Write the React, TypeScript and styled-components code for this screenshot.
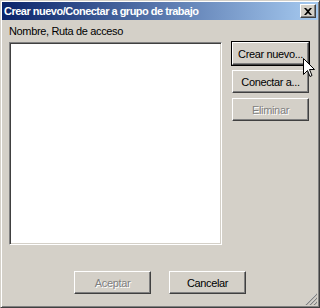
import React from 'react';
import styled, { createGlobalStyle, css } from 'styled-components';

const GlobalStyle = createGlobalStyle`
  html, body {
    margin: 0;
    padding: 0;
    background: #d4d0c8;
  }
  * {
    box-sizing: border-box;
  }
`;

const Window = styled.div`
  position: relative;
  width: 320px;
  height: 308px;
  background: #d4d0c8;
  border: 1px solid;
  border-color: #d4d0c8 #404040 #404040 #d4d0c8;
  box-shadow: inset 1px 1px #ffffff, inset -1px -1px #808080;
  padding: 1px;
  display: flex;
  flex-direction: column;
  font-family: 'Liberation Sans', Arial, sans-serif;
  font-size: 11px;
  letter-spacing: -0.35px;
  color: #000;
  white-space: nowrap;
`;

const TitleBar = styled.div`
  height: 18px;
  display: flex;
  align-items: center;
  justify-content: space-between;
  padding: 0 2px 0 2px;
  background: linear-gradient(to right, #0a246a, #a6caf0);
`;

const Title = styled.span`
  color: #fff;
  font-weight: bold;
  font-size: 11px;
  letter-spacing: -0.5px;
`;

const CloseButton = styled.div`
  width: 16px;
  height: 14px;
  background: #d4d0c8;
  border: 1px solid;
  border-color: #ffffff #404040 #404040 #ffffff;
  box-shadow: inset -1px -1px #808080;
  display: flex;
  align-items: center;
  justify-content: center;
`;

const Main = styled.div`
  display: flex;
  padding: 0 0 0 7px;
  gap: 10px;
`;

const LeftColumn = styled.div`
  display: flex;
  flex-direction: column;
`;

const Label = styled.div`
  margin-top: 5px;
  height: 13px;
  line-height: 13px;
  margin-bottom: 4px;
`;

const ListBox = styled.div`
  width: 213px;
  height: 203px;
  background: #fff;
  border: 1px solid;
  border-color: #808080 #ffffff #ffffff #808080;
  box-shadow: inset 1px 1px #404040, inset -1px -1px #d4d0c8;
`;

const ButtonColumn = styled.div`
  display: flex;
  flex-direction: column;
  gap: 5px;
  padding-top: 22px;
`;

const Button = styled.div<{ $default?: boolean; $disabled?: boolean }>`
  width: 77px;
  height: 23px;
  display: flex;
  align-items: center;
  justify-content: center;
  background: #d4d0c8;
  border: 1px solid;
  border-color: #ffffff #404040 #404040 #ffffff;
  box-shadow: inset -1px -1px #808080;
  ${({ $default }) =>
    $default &&
    css`
      box-shadow: 0 0 0 1px #000, inset -1px -1px #808080;
    `}
  ${({ $disabled }) =>
    $disabled &&
    css`
      color: #808080;
      text-shadow: 1px 1px #ffffff;
    `}
`;

const Footer = styled.div`
  display: flex;
  justify-content: center;
  gap: 18px;
  padding-top: 26px;
`;

const Grip = styled.svg`
  position: absolute;
  right: 2px;
  bottom: 2px;
`;

const Cursor = styled.svg`
  position: absolute;
  left: 302px;
  top: 57px;
`;

export default function App() {
  return (
    <>
      <GlobalStyle />
      <Window>
        <TitleBar>
          <Title>Crear nuevo/Conectar a grupo de trabajo</Title>
          <CloseButton>
            <svg width="8" height="7" viewBox="0 0 8 7">
              <path d="M0 0h2l2 2 2-2h2L5 3.5 8 7H6L4 5 2 7H0l3-3.5z" fill="#000" />
            </svg>
          </CloseButton>
        </TitleBar>
        <Main>
          <LeftColumn>
            <Label>Nombre, Ruta de acceso</Label>
            <ListBox />
          </LeftColumn>
          <ButtonColumn>
            <Button $default>Crear nuevo...</Button>
            <Button>Conectar a...</Button>
            <Button $disabled>Eliminar</Button>
          </ButtonColumn>
        </Main>
        <Footer>
          <Button $disabled>Aceptar</Button>
          <Button>Cancelar</Button>
        </Footer>
        <Grip width="12" height="12" viewBox="0 0 12 12">
          <path d="M11 1L1 11M11 5L5 11M11 9L9 11" stroke="#ffffff" strokeWidth="1" />
          <path d="M12 1L1 12M12 5L5 12M12 9L9 12" stroke="#808080" strokeWidth="1.2" />
        </Grip>
        <Cursor width="12" height="20" viewBox="0 0 12 20">
          <path
            d="M0.5 0.5V16.5L4.5 12.5L7 18.5L9 17.5L6.5 11.5H11.5Z"
            fill="#fff"
            stroke="#000"
            strokeWidth="1"
          />
        </Cursor>
      </Window>
    </>
  );
}
